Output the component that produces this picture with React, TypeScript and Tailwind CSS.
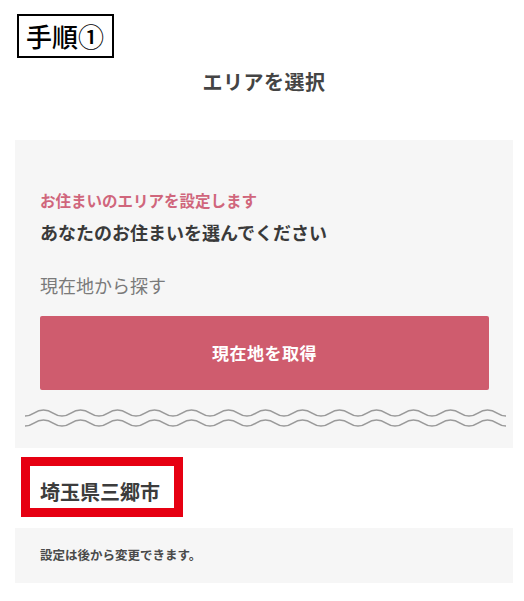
const jp = { fontFamily: '"Noto Sans CJK JP", "Noto Sans", sans-serif' };

function Waves() {
  const period = 37;
  const count = 13;
  const line = (y: number) => {
    let d = `M0 ${y}`;
    for (let i = 0; i < count; i++) {
      const x = i * period;
      d += ` C${x + 9} ${y} ${x + 9} ${y - 6} ${x + 18.5} ${y - 6} C${x + 28} ${y - 6} ${x + 28} ${y} ${x + 37} ${y}`;
    }
    return d;
  };
  return (
    <svg width="482" height="22" viewBox="0 0 482 22" className="block">
      <path d={line(9)} fill="none" stroke="#9a9a9a" strokeWidth="1.6" />
      <path d={line(19)} fill="none" stroke="#9a9a9a" strokeWidth="1.6" />
    </svg>
  );
}

export default function App() {
  return (
    <div className="relative w-[524px] h-[601px] bg-white overflow-hidden" style={jp}>
      <div className="ml-[15px] pt-[30px] w-[498px] flex flex-col">
        {/* header */}
        <div className="h-[110px] bg-white flex items-start justify-center pt-[38px]">
          <span className="text-[20px] font-bold text-[#444] leading-[28px] tracking-[0.5px]">エリアを選択</span>
        </div>

        {/* grey body */}
        <div className="h-[308px] bg-[#f6f6f6] flex flex-col pl-[25px]">
          <p className="mt-[50px] text-[15.5px] leading-[20px] font-bold text-[#d0667c]">お住まいのエリアを設定します</p>
          <p className="mt-[10px] text-[18px] leading-[24px] font-bold text-[#3a3a3a]">あなたのお住まいを選んでください</p>
          <p className="mt-[29px] text-[18px] leading-[24px] text-[#7a7a7a]">現在地から探す</p>
          <button className="mt-[19px] w-[449px] h-[74px] rounded-[2px] bg-[#cf5c6e] text-white text-[17px] font-bold tracking-[0.5px]">
            現在地を取得
          </button>
          <div className="mt-[17px] -ml-[15px]">
            <Waves />
          </div>
        </div>

        {/* selected city */}
        <div className="h-[80px] bg-white flex items-center pl-[25px]">
          <span className="text-[20px] font-bold text-[#3c3c3c] leading-[28px] mt-[8px]">埼玉県三郷市</span>
        </div>

        {/* note */}
        <div className="h-[55px] bg-[#f6f6f6] pl-[25px] pt-[13px]">
          <span className="text-[12.5px] font-bold text-[#4a4a4a] leading-[18px]">設定は後から変更できます。</span>
        </div>
      </div>

      {/* annotation: step label */}
      <div className="absolute left-[17px] top-[14px] w-[97px] h-[44px] border-2 border-black bg-white flex items-center pl-[7px]">
        <span className="text-[26px] leading-none text-black font-medium">手順①</span>
      </div>

      {/* annotation: red highlight */}
      <div className="absolute left-[21px] top-[457px] w-[162px] h-[60px] border-[9px] border-[#e60012]" />
    </div>
  );
}
